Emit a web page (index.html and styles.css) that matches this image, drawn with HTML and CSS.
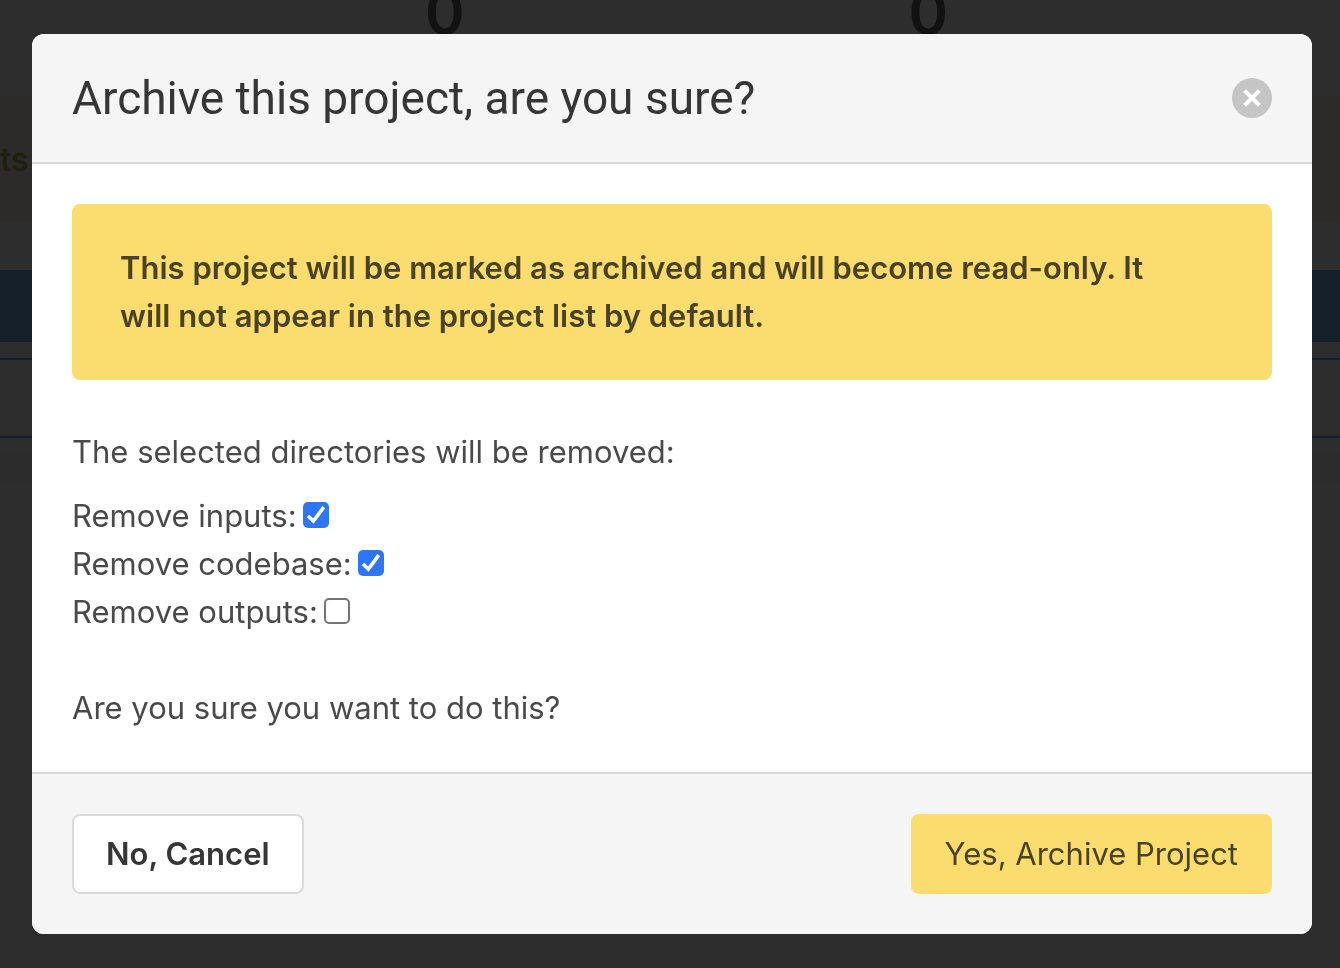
FILE: index.html
```html
<!DOCTYPE html>
<html lang="en">
<head>
<meta charset="utf-8">
<meta name="viewport" content="width=device-width, initial-scale=1">
<title>Archive project</title>
<link rel="stylesheet" href="styles.css">
</head>
<body>
<main class="page" aria-hidden="true">
  <div class="stats">
    <span class="stat">0</span>
    <span class="stat">0</span>
  </div>
  <div class="notice">ts</div>
  <div class="toolbar"></div>
  <div class="panel"></div>
  <div class="shade"></div>
</main>

<div class="overlay">
  <form class="modal" role="dialog" aria-modal="true" aria-labelledby="modal-title">
    <header class="modal-header">
      <h1 class="modal-title" id="modal-title">Archive this project, are you sure?</h1>
      <button class="close" type="button" aria-label="Close">
        <svg class="close-icon" viewBox="0 0 40 40" aria-hidden="true">
          <path d="M12.6 12.6 27.4 27.4M27.4 12.6 12.6 27.4" fill="none" stroke="currentColor" stroke-width="4"/>
        </svg>
      </button>
    </header>
    <div class="modal-body">
      <p class="alert">This project will be marked as archived and will become read-only. It will not appear in the project list by default.</p>
      <p class="intro">The selected directories will be removed:</p>
      <div class="options">
        <div class="option"><label for="inputs">Remove inputs:</label><input class="check" type="checkbox" id="inputs" checked></div>
        <div class="option"><label for="codebase">Remove codebase:</label><input class="check" type="checkbox" id="codebase" checked></div>
        <div class="option"><label for="outputs">Remove outputs:</label><input class="check" type="checkbox" id="outputs"></div>
      </div>
      <p class="question">Are you sure you want to do this?</p>
    </div>
    <footer class="modal-footer">
      <button class="button button-cancel" type="button">No, Cancel</button>
      <button class="button button-archive" type="submit">Yes, Archive Project</button>
    </footer>
  </form>
</div>
</body>
</html>
```

FILE: styles.css
```css
* {
  box-sizing: border-box;
}

body {
  margin: 0;
  overflow: hidden;
  background: #2d2d2d;
  color: #4a4a4a;
  font: 400 31px/48px Inter, "Liberation Sans", sans-serif;
}

p,
h1 {
  margin: 0;
}

/* Dimmed page behind the dialog */
.page {
  margin-top: -18px;
}

.stats {
  display: grid;
  grid-template-columns: 1fr 1fr;
  height: 114px;
  padding: 0 170px 0 203px;
}

.stat {
  color: #121212;
  font-size: 60px;
  font-weight: 600;
  line-height: 60px;
  text-align: center;
}

.notice {
  height: 126px;
  padding-top: 40px;
  background: #2d2b29;
  color: #1f1e0f;
  font-size: 32px;
  font-weight: 600;
}

.toolbar {
  height: 72px;
  margin: 48px 0 16px;
  background: #15202a;
}

.panel {
  height: 80px;
  border: solid #141d2c;
  border-width: 2px 0;
}

.shade {
  height: 32px;
  margin-top: 16px;
  background: #2c2c2c;
}

/* Dialog */
.overlay {
  position: fixed;
  inset: 0;
  overflow: auto;
  padding: 34px 28px 34px 32px;
}

.modal {
  overflow: hidden;
  border-radius: 12px;
  background: #fff;
}

.modal-header,
.modal-footer {
  display: flex;
  align-items: center;
  justify-content: space-between;
  padding: 40px;
  background: #f5f5f5;
}

.modal-header {
  border-bottom: 2px solid #dbdbdb;
}

.modal-title {
  color: #363636;
  font-family: Roboto, Inter, sans-serif;
  font-size: 46px;
  font-weight: 400;
  line-height: 48px;
}

.close {
  width: 40px;
  height: 40px;
  padding: 0;
  border: 0;
  border-radius: 50%;
  background: #c5c5c5;
  color: #fff;
}

.close-icon {
  display: block;
}

.modal-body {
  padding: 40px;
}

.alert {
  margin-bottom: 48px;
  padding: 40px 80px 40px 48px;
  border-radius: 8px;
  background: #fbdd6f;
  color: #4b4221;
  font-weight: 600;
}

.intro {
  margin-bottom: 16px;
}

.options {
  margin-bottom: 48px;
}

.option {
  display: flex;
  gap: 6px;
}

.check {
  appearance: none;
  width: 26px;
  height: 26px;
  margin: 10px 0 0;
  border: 2px solid #767676;
  border-radius: 5px;
  background: #fff;
}

.check:checked {
  border: 0;
  background: #2f76f6 url("data:image/svg+xml,%3Csvg xmlns='http://www.w3.org/2000/svg' viewBox='0 0 26 26'%3E%3Cpath d='M5 14 10.4 19 20.8 5.2' fill='none' stroke='white' stroke-width='3.6'/%3E%3C/svg%3E");
}

.modal-footer {
  border-top: 2px solid #dbdbdb;
}

.button {
  height: 80px;
  padding: 0 32px;
  border: 2px solid transparent;
  border-radius: 8px;
  font: inherit;
}

.button-cancel {
  border-color: #dbdbdb;
  background: #fff;
  color: #363636;
  font-weight: 600;
}

.button-archive {
  border-color: #fbdd6f;
  background: #fbdd6f;
  color: #4b4221;
}
```
